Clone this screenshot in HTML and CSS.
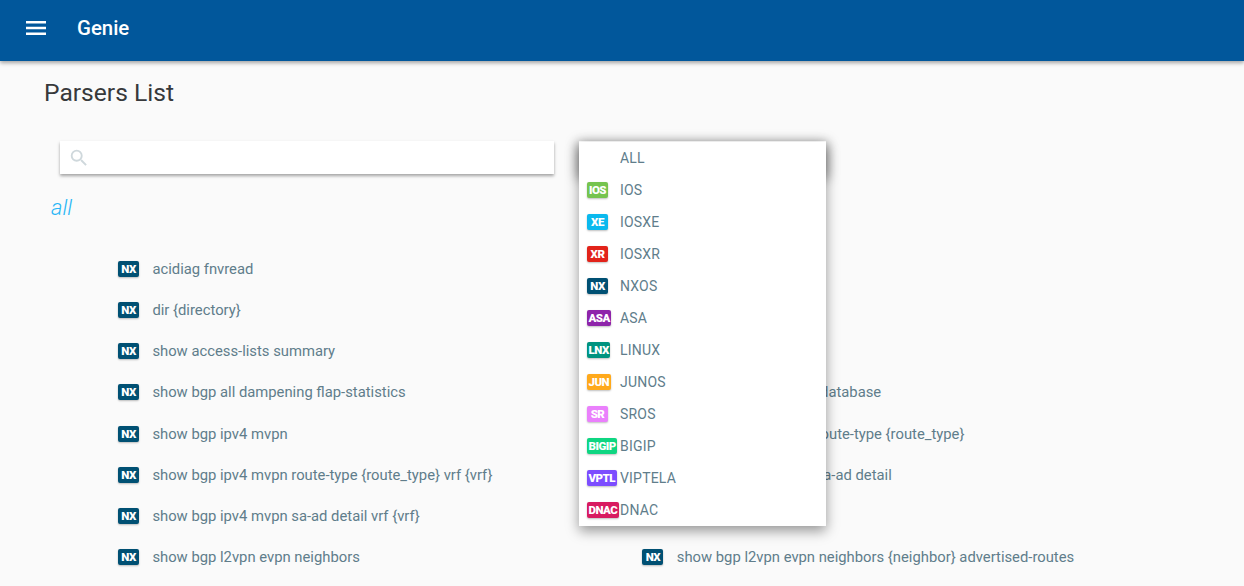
FILE: index.html
```html
<!DOCTYPE html>
<html lang="en">
<head>
<meta charset="utf-8">
<title>Genie</title>
<link rel="stylesheet" href="styles.css">
</head>
<body>
<header class="topbar">
  <svg class="menu-icon" viewBox="0 0 20 14" width="20" height="14"><path d="M0 1.2h20M0 7h20M0 12.8h20" stroke="#fff" stroke-width="2.4"/></svg>
  <span class="brand">Genie</span>
</header>
<main class="page">
  <h1 class="title">Parsers List</h1>
  <div class="filters">
    <div class="search">
      <svg class="search-icon" viewBox="0 0 24 24" width="22" height="22"><path fill="#cfd8dc" d="M15.5 14h-.79l-.28-.27A6.47 6.47 0 0 0 16 9.5 6.5 6.5 0 1 0 9.5 16c1.61 0 3.09-.59 4.23-1.57l.27.28v.79l5 4.99L20.49 19l-4.99-5zm-6 0C7.01 14 5 11.99 5 9.5S7.01 5 9.5 5 14 7.01 14 9.5 11.99 14 9.5 14z"/></svg>
    </div>
    <div class="select">
      <ul class="dropdown">
        <li class="option"><span class="slot"></span>ALL</li>
        <li class="option"><span class="slot"><span class="tag ios">IOS</span></span>IOS</li>
        <li class="option"><span class="slot"><span class="tag xe">XE</span></span>IOSXE</li>
        <li class="option"><span class="slot"><span class="tag xr">XR</span></span>IOSXR</li>
        <li class="option"><span class="slot"><span class="tag nx">NX</span></span>NXOS</li>
        <li class="option"><span class="slot"><span class="tag asa">ASA</span></span>ASA</li>
        <li class="option"><span class="slot"><span class="tag lnx">LNX</span></span>LINUX</li>
        <li class="option"><span class="slot"><span class="tag jun">JUN</span></span>JUNOS</li>
        <li class="option"><span class="slot"><span class="tag sr">SR</span></span>SROS</li>
        <li class="option"><span class="slot"><span class="tag big">BIGIP</span></span>BIGIP</li>
        <li class="option"><span class="slot"><span class="tag vp">VPTL</span></span>VIPTELA</li>
        <li class="option"><span class="slot"><span class="tag dn">DNAC</span></span>DNAC</li>
      </ul>
    </div>
  </div>
  <h2 class="group">all</h2>
  <div class="parsers">
    <div class="parser"><span class="tag nx">NX</span><span>acidiag fnvread</span></div>
    <div class="parser"></div>
    <div class="parser"><span class="tag nx">NX</span><span>dir {directory}</span></div>
    <div class="parser"></div>
    <div class="parser"><span class="tag nx">NX</span><span>show access-lists summary</span></div>
    <div class="parser"></div>
    <div class="parser"><span class="tag nx">NX</span><span>show bgp all dampening flap-statistics</span></div>
    <div class="parser"><span class="tag nx"></span><span>show bgp all nexthop database</span></div>
    <div class="parser"><span class="tag nx">NX</span><span>show bgp ipv4 mvpn</span></div>
    <div class="parser"><span class="tag nx"></span><span>show bgp ipv4 mvpn route-type {route_type}</span></div>
    <div class="parser"><span class="tag nx">NX</span><span>show bgp ipv4 mvpn route-type {route_type} vrf {vrf}</span></div>
    <div class="parser"><span class="tag nx"></span><span>show bgp ipv4 mvpn sa-ad detail</span></div>
    <div class="parser"><span class="tag nx">NX</span><span>show bgp ipv4 mvpn sa-ad detail vrf {vrf}</span></div>
    <div class="parser"></div>
    <div class="parser"><span class="tag nx">NX</span><span>show bgp l2vpn evpn neighbors</span></div>
    <div class="parser"><span class="tag nx">NX</span><span>show bgp l2vpn evpn neighbors {neighbor} advertised-routes</span></div>
  </div>
</main>
</body>
</html>
```
FILE: styles.css
```css
* { box-sizing: border-box; }
html, body { margin: 0; height: 586px; overflow: hidden; }
body { background: #fafafa; font-family: Roboto, "Liberation Sans", sans-serif; color: #607d8b; }
.topbar {
  position: relative; z-index: 2; height: 61px; background: #01579b;
  display: flex; align-items: center; padding-left: 26px;
  box-shadow: 0 2px 4px rgba(0,0,0,.35);
}
.menu-icon { display: block; margin-top: -5px; }
.brand { margin-left: 31px; margin-top: -5px; color: #fff; font-size: 20.4px; font-weight: 500; }
.page { padding: 0 0 0 44px; }
.title { margin: 17px 0 0; font-size: 24.6px; line-height: 29px; font-weight: 400; color: #37393b; }
.filters { display: flex; margin: 34px 0 0 16px; }
.search {
  width: 494px; height: 33px; background: #fff; display: flex; align-items: center; padding-left: 8px;
  box-shadow: 0 2px 3px rgba(0,0,0,.35);
}
.select {
  position: relative; width: 247px; height: 33px; margin-left: 25px; background: #fff;
  box-shadow: 0 3px 12px 2px rgba(0,0,0,.4);
}
.dropdown {
  position: absolute; z-index: 3; top: 1px; left: 0; width: 247px; margin: 0; padding: 0; list-style: none;
  background: #fff; box-shadow: 0 5px 12px rgba(0,0,0,.4);
}
.option { display: flex; align-items: center; height: 32px; padding-left: 8px; font-size: 14px; letter-spacing: .2px; color: #607d8b; }
.slot { flex: none; width: 33px; display: flex; }
.tag {
  flex: none; display: inline-block; height: 16px; min-width: 21px; padding: 0 1.5px; border-radius: 2px;
  color: #fff; font-size: 11.5px; font-weight: 900; line-height: 16px; text-align: center; letter-spacing: -.5px;
  box-shadow: 0 1px 2px rgba(0,0,0,.25);
}
.ios { background: #76c44f; }
.xe { background: #0ab9ee; }
.xr { background: #e2231a; }
.nx { background: #005073; }
.asa { background: #8e24aa; }
.lnx { background: #00937f; }
.jun { background: #ffa91b; }
.sr { background: #ea80fc; }
.big { background: #0fd682; }
.vp { background: #7c4dff; }
.dn { background: #d81b60; }
.group { margin: 19px 0 0 7px; font-size: 22px; line-height: 29px; font-weight: 300; font-style: italic; color: #29b6f6; }
.parsers { display: grid; grid-template-columns: 524.4px 1fr; grid-auto-rows: 41.14px; margin: 26.5px 0 0 74px; }
.parser { display: flex; align-items: center; gap: 13.4px; font-size: 14.8px; color: #607d8b; white-space: nowrap; }
```
